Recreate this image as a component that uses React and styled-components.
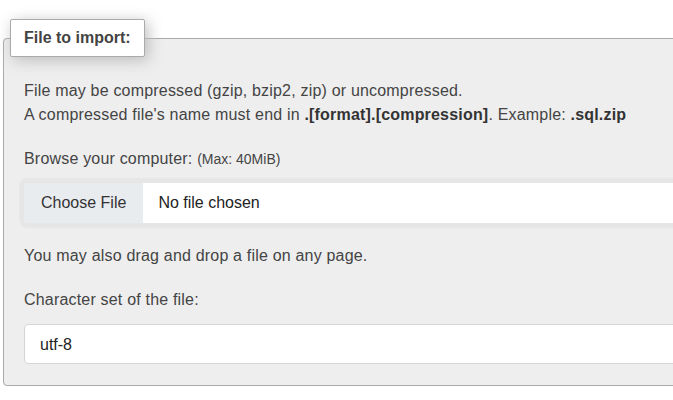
import React from "react";
import styled, { createGlobalStyle } from "styled-components";

const Global = createGlobalStyle`
  html, body { margin: 0; padding: 0; background: #fff; overflow: hidden; }
  body { font-family: "Liberation Sans", Arial, sans-serif; color: #444; }
`;

const Page = styled.div`
  width: 860px;
  padding: 0 0 0 3px;
`;

const Fieldset = styled.fieldset`
  margin: 19px 0 0 0;
  padding: 0;
  min-width: 0;
  background: #eee;
  border: 1px solid #aaa;
  border-radius: 4px;
`;

const Legend = styled.legend`
  margin-left: 6px;
  padding: 8px 13px;
  background: #fff;
  border: 1px solid #aaa;
  border-radius: 2px;
  box-shadow: 3px 3px 15px #bbb;
  font-size: 16px;
  line-height: 20px;
  font-weight: bold;
  color: #444;
`;

const Body = styled.div`
  padding: 22px 20px 21px 20px;
`;

const Text = styled.p`
  margin: 0 0 ${(p) => p.$gap ?? 20}px;
  font-size: 16px;
  line-height: 24px;
  letter-spacing: 0.19px;
  color: #444;
  b { color: #333; }
`;

const Small = styled.span`
  font-size: 14px;
  letter-spacing: 0;
`;

const FileField = styled.div`
  display: flex;
  height: 40px;
  margin: 0 0 21px;
  background: #fff;
  border-radius: 4px;
  box-shadow: 0 0 1px 5px #e6e6e6;
  font-size: 16px;
  color: #212529;
  overflow: hidden;
`;

const FileButton = styled.div`
  display: flex;
  align-items: center;
  padding: 0 17px;
  background: #e9ecef;
  color: #333;
`;

const FileName = styled.div`
  display: flex;
  align-items: center;
  padding-left: 15px;
  color: #222;
`;

const Select = styled.select`
  display: block;
  width: 100%;
  height: 40px;
  margin: 0;
  padding: 0 15px;
  appearance: none;
  background: #fff;
  border: 1px solid #d3d6d9;
  border-radius: 4px;
  font-family: "Liberation Sans", Arial, sans-serif;
  font-size: 16px;
  color: #222;
`;

export default function App() {
  return (
    <Page>
      <Global />
      <Fieldset>
        <Legend>File to import:</Legend>
        <Body>
          <Text>
            File may be compressed (gzip, bzip2, zip) or uncompressed.
            <br />
            A compressed file's name must end in <b>.[format].[compression]</b>. Example: <b>.sql.zip</b>
          </Text>
          <Text $gap={12}>
            Browse your computer: <Small>(Max: 40MiB)</Small>
          </Text>
          <FileField>
            <FileButton>Choose File</FileButton>
            <FileName>No file chosen</FileName>
          </FileField>
          <Text>You may also drag and drop a file on any page.</Text>
          <Text $gap={12}>Character set of the file:</Text>
          <Select defaultValue="utf-8">
            <option value="utf-8">utf-8</option>
          </Select>
        </Body>
      </Fieldset>
    </Page>
  );
}
